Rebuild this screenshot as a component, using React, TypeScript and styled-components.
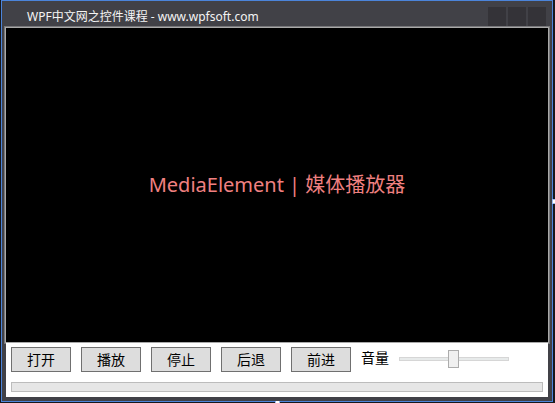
import React, { useState } from "react";
import styled, { createGlobalStyle } from "styled-components";

const GlobalStyle = createGlobalStyle`
  * { box-sizing: border-box; }
  body {
    margin: 0;
    background: #17181d;
    font-family: "Noto Sans", "Noto Sans CJK SC", sans-serif;
  }
`;

const Desktop = styled.div`
  position: relative;
  display: flex;
  height: 100vh;
  padding: 0 2px 1px 1px;
`;

const Window = styled.main`
  flex: 1;
  display: flex;
  flex-direction: column;
  min-width: 0;
  padding: 0 3px 4px;
  border: 1px solid #4b84da;
  background: #414147;
`;

const TitleBar = styled.header`
  display: flex;
  align-items: flex-end;
  justify-content: space-between;
  height: 26px;
  padding: 0 3px 1px 22px;
`;

const Title = styled.h1`
  margin: 0;
  color: #f4f4f4;
  font-size: 12px;
  font-weight: 400;
  line-height: 18px;
  white-space: nowrap;
`;

const Caption = styled.div`
  display: flex;
  gap: 2px;
`;

const CaptionButton = styled.button`
  width: 18px;
  height: 19px;
  padding: 0;
  border: 0;
  background: #343338;
`;

const Stage = styled.section`
  flex: 1;
  display: flex;
  align-items: center;
  justify-content: center;
  border: 1px solid #a9a9a9;
  outline: 1px solid #77777a;
  background: #000;
`;

const StageText = styled.p`
  margin: 0;
  color: #f08080;
  font-size: 20px;
  line-height: 28px;
  white-space: nowrap;
`;

const Controls = styled.section`
  position: relative;
  margin: 0 1px;
  padding: 4px 5px 5px;
  background: #fff;
`;

const Toolbar = styled.div`
  display: flex;
  align-items: center;
  gap: 10px;
  height: 25px;
  margin-bottom: 10px;
`;

const Button = styled.button`
  width: 60px;
  height: 25px;
  padding: 0;
  border: 1px solid #707070;
  background: #ddd;
  color: #000;
  font: inherit;
  font-size: 14px;
  line-height: 22px;
`;

const Label = styled.label`
  height: 24px;
  align-self: flex-start;
  font-size: 14px;
  line-height: 22px;
`;

const Slider = styled.input`
  appearance: none;
  align-self: flex-start;
  width: 110px;
  height: 24px;
  margin: 0;
  background: transparent;

  &::-webkit-slider-runnable-track {
    height: 4px;
    border: 1px solid #d6d6d6;
    background: #e7eaea;
  }

  &::-webkit-slider-thumb {
    appearance: none;
    width: 11px;
    height: 18px;
    margin-top: -8px;
    border: 1px solid #acacac;
    background: #f0f0f0;
  }
`;

const Progress = styled.div`
  height: 10px;
  border: 1px solid #bcbcbc;
  background: #e6e6e6;
`;

const ResizeHandle = styled.span<{ $side: "right" | "bottom" }>`
  position: absolute;
  background: #fff;
  border: 1px solid #9dbcf0;
  ${({ $side }) =>
    $side === "right"
      ? "right: 0; top: 50%; width: 3px; height: 5px; margin-top: -3px; border-width: 1px 0 1px 1px;"
      : "bottom: 0; left: 50%; width: 5px; height: 2px; margin-left: -3px; border-width: 0 1px;"}
`;

const actions = ["打开", "播放", "停止", "后退", "前进"];
const captions = ["最小化", "最大化", "关闭"];

export default function App() {
  const [volume, setVolume] = useState(49);

  return (
    <>
      <GlobalStyle />
      <Desktop>
        <Window>
          <TitleBar>
            <Title>WPF中文网之控件课程 - www.wpfsoft.com</Title>
            <Caption>
              {captions.map((name) => (
                <CaptionButton key={name} type="button" aria-label={name} />
              ))}
            </Caption>
          </TitleBar>
          <Stage>
            <StageText>MediaElement | 媒体播放器</StageText>
          </Stage>
          <Controls>
            <Toolbar>
              {actions.map((name) => (
                <Button key={name} type="button">{name}</Button>
              ))}
              <Label htmlFor="volume">音量</Label>
              <Slider
                id="volume"
                type="range"
                min={0}
                max={100}
                value={volume}
                onChange={(e) => setVolume(Number(e.target.value))}
              />
            </Toolbar>
            <Progress role="progressbar" aria-label="播放进度" aria-valuenow={0} />
          </Controls>
        </Window>
        <ResizeHandle $side="right" />
        <ResizeHandle $side="bottom" />
      </Desktop>
    </>
  );
}
